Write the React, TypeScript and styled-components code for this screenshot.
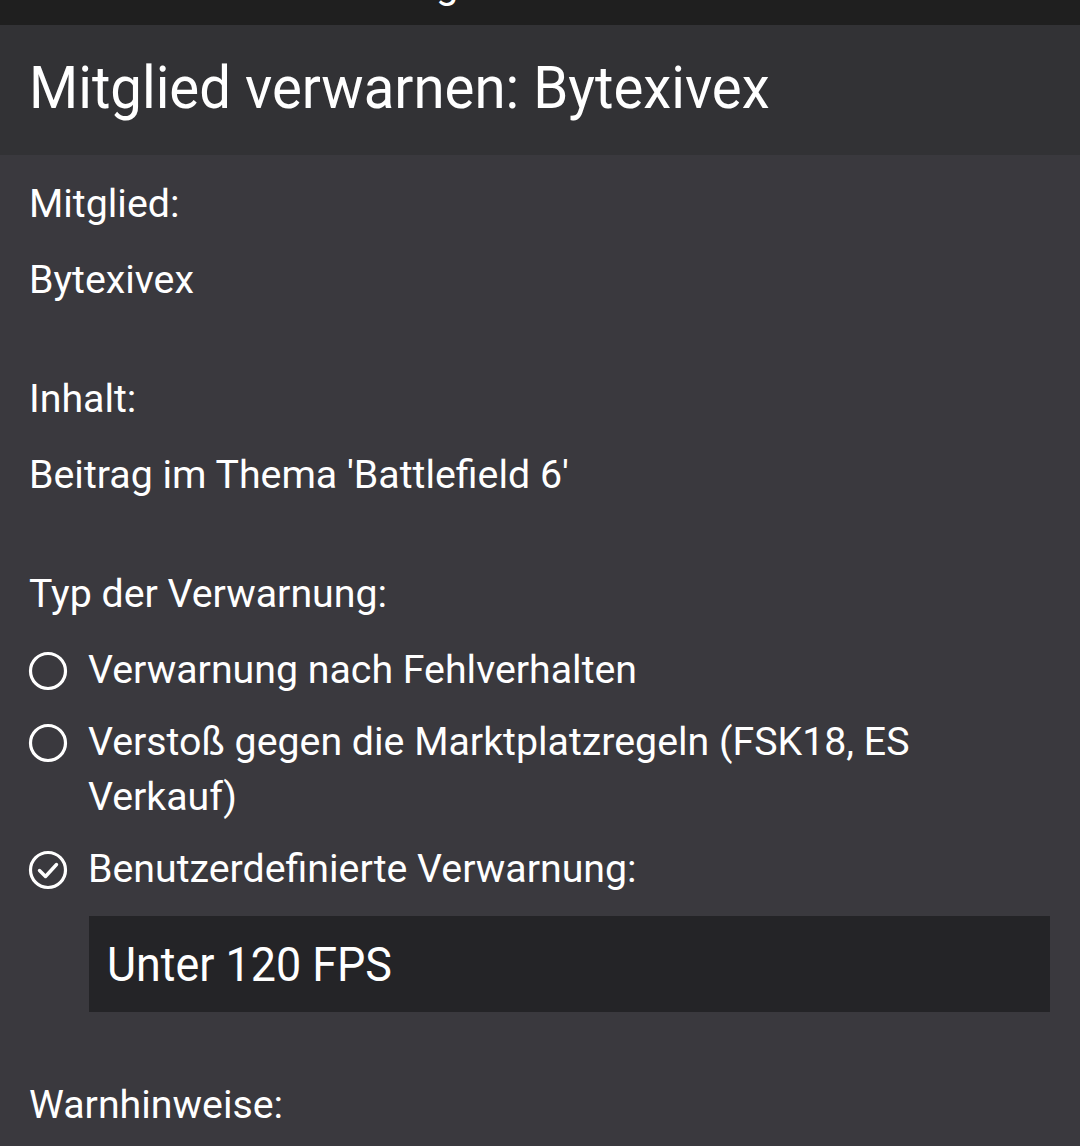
import React from "react";
import styled, { createGlobalStyle } from "styled-components";

const Global = createGlobalStyle`
  html, body { margin: 0; padding: 0; background: #3a393e; }
  body { font-family: Roboto, "Noto Sans", sans-serif; color: #ffffff; }
  * { box-sizing: border-box; }
`;

const Page = styled.div`
  width: 1080px;
  height: 1146px;
  overflow: hidden;
  background: #3a393e;
  display: flex;
  flex-direction: column;
`;

const StatusStrip = styled.div`
  height: 25px;
  background: #1f1f1f;
  position: relative;
  overflow: hidden;
  flex: none;
`;

const StripText = styled.span<{ $left: number }>`
  position: absolute;
  left: ${(p) => p.$left}px;
  bottom: 20px;
  font-size: 40px;
  line-height: 40px;
  color: #ffffff;
`;

const Header = styled.header`
  height: 130px;
  background: #323235;
  display: flex;
  align-items: center;
  padding-left: 29px;
  padding-bottom: 6px;
  flex: none;
`;

const Title = styled.h1`
  margin: 0;
  font-weight: 400;
  font-size: 59px;
  line-height: 1;
  color: #ffffff;
  transform: scaleX(0.955);
  transform-origin: left center;
  white-space: nowrap;
`;

const Body = styled.main`
  padding: 0 30px 0 29px;
  display: flex;
  flex-direction: column;
`;

const Label = styled.div<{ $top: number }>`
  font-size: 39.3px;
  line-height: 55px;
  margin-top: ${(p) => p.$top}px;
`;

const Value = styled.div`
  font-size: 39.3px;
  line-height: 55px;
  margin-top: 21px;
`;

const Options = styled.div`
  display: flex;
  flex-direction: column;
  gap: 17px;
  margin-top: 21px;
`;

const Option = styled.div`
  display: grid;
  grid-template-columns: 59px 1fr;
  align-items: start;
`;

const IconBox = styled.div`
  height: 55px;
  display: flex;
  align-items: center;
  margin-left: -1px;
`;

const OptionText = styled.div`
  font-size: 39.3px;
  line-height: 55px;
  padding-right: 100px;
`;

const Input = styled.div`
  margin: 19px 0 0 60px;
  height: 96px;
  background: #242427;
  display: flex;
  align-items: center;
  padding-left: 18px;
`;

const InputText = styled.span`
  font-size: 49px;
  transform: scaleX(0.915);
  transform-origin: left center;
  white-space: nowrap;
`;

const Circle = () => (
  <svg width="40" height="40" viewBox="0 0 40 40">
    <circle cx="20" cy="20" r="17.5" fill="none" stroke="#fff" strokeWidth="3.2" />
  </svg>
);

const CheckCircle = () => (
  <svg width="40" height="40" viewBox="0 0 40 40">
    <circle cx="20" cy="20" r="17.5" fill="none" stroke="#fff" strokeWidth="3.2" />
    <path d="M11.5 20.5 L17.5 26.5 L28.5 14.5" fill="none" stroke="#fff" strokeWidth="3.4" strokeLinecap="round" strokeLinejoin="round" />
  </svg>
);

export default function App() {
  return (
    <Page>
      <Global />
      <StatusStrip>
        <StripText $left={388}>Aug</StripText>
      </StatusStrip>
      <Header>
        <Title>Mitglied verwarnen: Bytexivex</Title>
      </Header>
      <Body>
        <Label $top={22}>Mitglied:</Label>
        <Value>Bytexivex</Value>
        <Label $top={64}>Inhalt:</Label>
        <Value>Beitrag im Thema 'Battlefield 6'</Value>
        <Label $top={64}>Typ der Verwarnung:</Label>
        <Options>
          <Option>
            <IconBox><Circle /></IconBox>
            <OptionText>Verwarnung nach Fehlverhalten</OptionText>
          </Option>
          <Option>
            <IconBox><Circle /></IconBox>
            <OptionText>Verstoß gegen die Marktplatzregeln (FSK18, ES Verkauf)</OptionText>
          </Option>
          <Option>
            <IconBox><CheckCircle /></IconBox>
            <OptionText>Benutzerdefinierte Verwarnung:</OptionText>
          </Option>
        </Options>
        <Input>
          <InputText>Unter 120 FPS</InputText>
        </Input>
        <Label $top={66}>Warnhinweise:</Label>
      </Body>
    </Page>
  );
}
